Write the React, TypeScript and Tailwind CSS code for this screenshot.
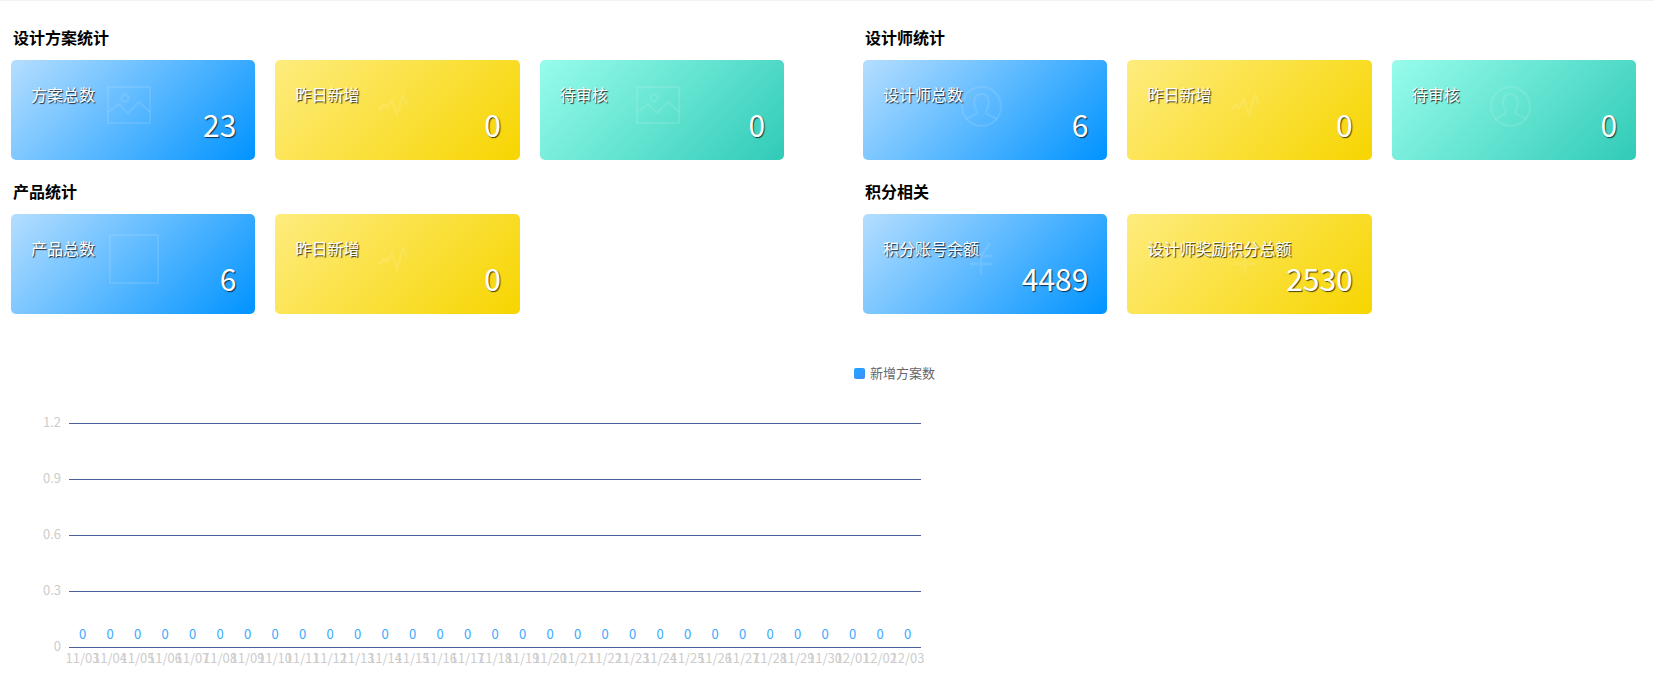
import React from 'react';

type Tone = 'blue' | 'yellow' | 'teal';
type IconName = 'image' | 'pulse' | 'user' | 'square' | 'yen';

interface CardData {
  label: string;
  value: string;
  tone: Tone;
  icon: IconName;
}

const toneClass: Record<Tone, string> = {
  blue: 'bg-[linear-gradient(135deg,#b5deff,#0093ff)]',
  yellow: 'bg-[linear-gradient(135deg,#feec7e,#f7d500)]',
  teal: 'bg-[linear-gradient(135deg,#98fcec,#30cbb7)]',
};

const ImageIcon = () => (
  <svg className="absolute left-[96px] top-[26px]" width="44" height="38" viewBox="0 0 44 38" fill="none" stroke="currentColor" strokeWidth="2">
    <rect x="1" y="1" width="42" height="36" />
    <circle cx="18" cy="12" r="3.5" />
    <path d="M1 26 L12 18 L21 27 L32 16 L43 26" />
  </svg>
);

const PulseIcon = () => (
  <svg className="absolute left-[103px] top-[33px]" width="30" height="24" viewBox="0 0 30 24" fill="none" stroke="currentColor" strokeWidth="2.5">
    <path d="M1 17 L6 12 L9 15 L14 7 L19 22 L25 2 L29 11" />
  </svg>
);

const UserIcon = () => (
  <svg className="absolute left-[98px] top-[26px]" width="41" height="41" viewBox="0 0 41 41" fill="none" stroke="currentColor" strokeWidth="2">
    <circle cx="20.5" cy="20.5" r="19.5" />
    <path d="M5 33 L15 28 C16 27 16 25 15 23 C12 18 12 8 20.5 8 C29 8 29 18 26 23 C25 25 25 27 26 28 L36 33" />
  </svg>
);

const SquareIcon = () => (
  <svg className="absolute left-[98px] top-[20px]" width="50" height="50" viewBox="0 0 50 50" fill="none" stroke="currentColor" strokeWidth="2">
    <rect x="1" y="1" width="48" height="48" />
  </svg>
);

const YenIcon = () => (
  <svg className="absolute left-[106px] top-[28px]" width="24" height="32" viewBox="0 0 24 32" fill="none" stroke="currentColor" strokeWidth="2.5">
    <path d="M3 1 L12 14 L21 1 M1 14 H23 M1 22 H23 M12 14 V32" />
  </svg>
);

const icons: Record<IconName, React.FC> = {
  image: ImageIcon,
  pulse: PulseIcon,
  user: UserIcon,
  square: SquareIcon,
  yen: YenIcon,
};

const StatCard: React.FC<CardData> = ({ label, value, tone, icon }) => {
  const Icon = icons[icon];
  return (
    <div className={`relative h-[100px] w-[244.4px] rounded-[5px] text-white ${toneClass[tone]}`}>
      <div className="text-white/10">
        <Icon />
      </div>
      <div className="relative pl-[20px] pt-[22px] text-base leading-6 [text-shadow:1px_1px_1px_rgba(0,0,0,0.8)]">{label}</div>
      <div className="relative mt-[-2px] pr-[19px] text-right text-[30px] leading-[40px] [text-shadow:1px_1px_1px_rgba(0,0,0,0.7)]">{value}</div>
    </div>
  );
};

const Section: React.FC<{ title: string; cards: CardData[] }> = ({ title, cards }) => (
  <div className="mb-[20px]">
    <h2 className="mb-[12px] pl-[2px] text-base font-bold leading-[22px] text-black">{title}</h2>
    <div className="flex gap-[20px]">
      {cards.map((c) => (
        <StatCard key={c.label + c.tone} {...c} />
      ))}
    </div>
  </div>
);

const dates = [
  ...Array.from({ length: 28 }, (_, i) => `11/${String(i + 3).padStart(2, '0')}`),
  '12/01',
  '12/02',
  '12/03',
];

// chart is offset from the top of the svg
const axis = [
  { label: '1.2', y: 84 },
  { label: '0.9', y: 140 },
  { label: '0.6', y: 196 },
  { label: '0.3', y: 252 },
  { label: '0', y: 308 },
];

const LineChart = () => (
  <svg className="block" width="960" height="346" viewBox="0 0 960 346">
    <defs>
      <linearGradient id="legendFill" x1="0" y1="0" x2="1" y2="1">
        <stop offset="0" stopColor="#1ea7ff" />
        <stop offset="1" stopColor="#3f8cff" />
      </linearGradient>
    </defs>
    <rect x="854" y="29" width="11" height="11" rx="2" fill="url(#legendFill)" />
    <text x="870" y="39" fontSize="13" fill="#666">新增方案数</text>
    {axis.map((a) => (
      <g key={a.label}>
        <line x1="69" x2="921" y1={a.y + 0.5} y2={a.y + 0.5} stroke="#4a5f9b" />
        <text x="61" y={a.y + 4} fontSize="13" fill="#ccc" textAnchor="end">{a.label}</text>
      </g>
    ))}
    {dates.map((d, i) => (
      <g key={d}>
        <text x={82.5 + i * 27.5} y={300} fontSize="13" fill="#3ba9ff" textAnchor="middle">0</text>
        <text x={82.5 + i * 27.5} y={324} fontSize="13" fill="#ccc" textAnchor="middle">{d}</text>
      </g>
    ))}
  </svg>
);

export default function App() {
  return (
    <div className="min-h-[686px] border-t border-[#f0f2f5] bg-white font-['Noto_Sans_CJK_SC','Noto_Sans',sans-serif]">
      <div className="flex gap-[78.8px] pl-[11px] pt-[25px]">
        <div className="w-[773.2px]">
          <Section
            title="设计方案统计"
            cards={[
              { label: '方案总数', value: '23', tone: 'blue', icon: 'image' },
              { label: '昨日新增', value: '0', tone: 'yellow', icon: 'pulse' },
              { label: '待审核', value: '0', tone: 'teal', icon: 'image' },
            ]}
          />
          <Section
            title="产品统计"
            cards={[
              { label: '产品总数', value: '6', tone: 'blue', icon: 'square' },
              { label: '昨日新增', value: '0', tone: 'yellow', icon: 'pulse' },
            ]}
          />
        </div>
        <div className="w-[773.2px]">
          <Section
            title="设计师统计"
            cards={[
              { label: '设计师总数', value: '6', tone: 'blue', icon: 'user' },
              { label: '昨日新增', value: '0', tone: 'yellow', icon: 'pulse' },
              { label: '待审核', value: '0', tone: 'teal', icon: 'user' },
            ]}
          />
          <Section
            title="积分相关"
            cards={[
              { label: '积分账号余额', value: '4489', tone: 'blue', icon: 'yen' },
              { label: '设计师奖励积分总额', value: '2530', tone: 'yellow', icon: 'yen' },
            ]}
          />
        </div>
      </div>
      <div className="mt-[5px]">
        <LineChart />
      </div>
    </div>
  );
}
